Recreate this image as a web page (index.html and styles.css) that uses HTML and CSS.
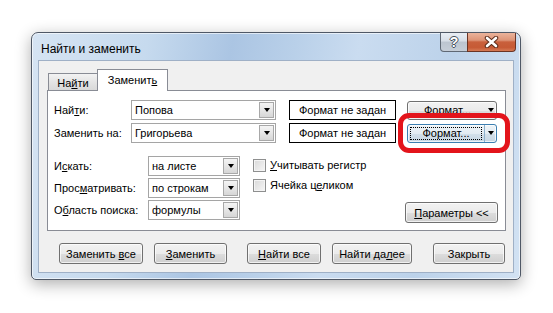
FILE: index.html
```html
<!DOCTYPE html>
<html>
<head>
  <title>Найти и заменить</title>
  <link rel="stylesheet" href="styles.css">
</head>
<body>
  <div class="page">
    <div class="window">
      <div class="titlebar">
        <span class="title">Найти и заменить</span>
        <div class="caption-buttons">
          <div class="cap help">?</div>
          <div class="cap close">
            <svg width="15" height="12" viewBox="0 0 15 12">
              <path d="M3 2 L12 10 M12 2 L3 10" stroke="#5a2a18" stroke-width="4.5" stroke-linecap="round"/>
              <path d="M3 2 L12 10 M12 2 L3 10" stroke="#fff" stroke-width="2.6" stroke-linecap="round"/>
            </svg>
          </div>
        </div>
      </div>

      <div class="client">
        <div class="tabs">
          <div class="tab">На<u>й</u>ти</div>
          <div class="tab active">Заменит<u>ь</u></div>
        </div>

        <div class="tab-panel">
          <div class="find-row">
            <span class="label">Най<u>т</u>и:</span>
            <div class="combo find-combo"><span class="value">Попова</span><span class="drop"></span></div>
            <div class="format-box">Формат не задан</div>
            <div class="btn split-btn"><span class="split-label">Формат...</span><span class="split-arrow"><span class="tri"></span></span></div>
          </div>
          <div class="find-row">
            <span class="label">Заменить на:</span>
            <div class="combo find-combo"><span class="value">Григорьева</span><span class="drop"></span></div>
            <div class="format-box">Формат не задан</div>
            <div class="btn split-btn focused"><span class="split-label"><span class="focus-rect">Формат...</span></span><span class="split-arrow"><span class="tri"></span></span></div>
          </div>

          <div class="options">
            <div class="selects">
              <span class="label">И<u>с</u>кать:</span>
              <div class="combo opt-combo"><span class="value">на листе</span><span class="drop"></span></div>
              <span class="label">Прос<u>м</u>атривать:</span>
              <div class="combo opt-combo"><span class="value">по строкам</span><span class="drop"></span></div>
              <span class="label">О<u>б</u>ласть поиска:</span>
              <div class="combo opt-combo"><span class="value">формулы</span><span class="drop"></span></div>
            </div>
            <div class="checks">
              <div class="check"><span class="box"></span><span><u>У</u>читывать регистр</span></div>
              <div class="check"><span class="box"></span><span>Ячейка ц<u>е</u>ликом</span></div>
            </div>
            <div class="btn params-btn"><span><u>П</u>араметры &lt;&lt;</span></div>
          </div>
        </div>

        <div class="actions">
          <div class="btn-group">
            <div class="btn w84"><span>Заменить <u>в</u>се</span></div>
            <div class="btn w73"><span><u>З</u>аменить</span></div>
          </div>
          <div class="btn-group">
            <div class="btn w74"><span><u>Н</u>айти все</span></div>
            <div class="btn w80"><span>Найти да<u>л</u>ее</span></div>
          </div>
          <div class="btn w72"><span>Закрыть</span></div>
        </div>
      </div>
    </div>
    <div class="highlight"></div>
  </div>
</body>
</html>
```

FILE: styles.css
```css
body {
  margin: 0;
  background: #fff;
  font-family: "Liberation Sans", Arial, sans-serif;
  font-size: 11px;
  color: #000;
}
u {
  text-underline-offset: 1px;
}
.page {
  position: relative;
  width: 553px;
  height: 313px;
  padding: 32px 0 0 31px;
  box-sizing: border-box;
}
.window {
  width: 490px;
  box-sizing: border-box;
  border: 1px solid #4f5866;
  border-radius: 7px 7px 5px 5px;
  padding: 0 6px 6px 6px;
  background: linear-gradient(100deg, #d6e4f3 0%, #c6daee 22%, #abc5e3 38%, #b9d0e9 50%, #cadcf0 62%, #bcd2ea 80%, #d2e2f3 100%);
  box-shadow: 0 4px 16px rgba(0, 0, 0, 0.32), inset 0 0 0 1px rgba(255, 255, 255, 0.6);
}

/* title bar */
.titlebar {
  display: flex;
  height: 27px;
}
.title {
  font-size: 12px;
  padding: 9px 0 0 3px;
}
.caption-buttons {
  display: flex;
  margin-left: auto;
  margin-right: -2px;
}
.cap {
  height: 19px;
  box-sizing: border-box;
  border: 1px solid #5f6874;
  border-top: none;
  display: flex;
  align-items: center;
  justify-content: center;
}
.help {
  width: 28px;
  border-radius: 0 0 0 4px;
  background: linear-gradient(#e9eef4 0%, #d7dee7 45%, #bcc5d0 50%, #c6ced8 100%);
  color: #fff;
  font-weight: bold;
  font-size: 14px;
  text-shadow: 1px 0 #45505c, -1px 0 #45505c, 0 1px #45505c, 0 -1px #45505c;
}
.close {
  width: 49px;
  margin-left: -1px;
  border-color: #6b3424;
  border-radius: 0 0 4px 0;
  background: linear-gradient(#eab39b 0%, #dd9477 40%, #c9603c 50%, #c65a35 80%, #d57a55 100%);
}

/* client area */
.client {
  background: #f0f0f0;
  border: 1px solid #9fb0c6;
  padding: 8px 7px 8px 8px;
}
.tabs {
  display: flex;
  align-items: flex-end;
  height: 21px;
  padding-left: 1px;
}
.tab {
  width: 50px;
  height: 17px;
  box-sizing: border-box;
  border: 1px solid #898c95;
  border-bottom: none;
  background: linear-gradient(#f3f3f3, #e4e4e4 50%, #d9d9d9);
  text-align: center;
  line-height: 18px;
}
.tab.active {
  width: 71px;
  height: 22px;
  margin-left: -1px;
  margin-bottom: -1px;
  position: relative;
  z-index: 1;
  background: #fff;
  line-height: 21px;
}
.tab-panel {
  background: #fff;
  border: 1px solid #898c95;
  padding: 9px 7px 10px 6px;
}

/* find / replace rows */
.find-row {
  display: flex;
  align-items: center;
  height: 20px;
}
.find-row + .find-row {
  margin-top: 3px;
}
.find-row .label {
  width: 77px;
}
.combo {
  display: flex;
  height: 20px;
  box-sizing: border-box;
  border: 1px solid #a5a5a5;
  background: #fff;
  padding: 1px;
}
.combo .value {
  flex: 1;
  padding-left: 2px;
  line-height: 16px;
}
.combo .drop {
  width: 15px;
  box-sizing: border-box;
  border: 1px solid #a8a8a8;
  background: linear-gradient(#f4f4f4, #e6e6e6 50%, #d6d6d6);
  display: flex;
  align-items: center;
  justify-content: center;
}
.combo .drop::after,
.tri {
  content: "";
  display: block;
  width: 0;
  height: 0;
  border-left: 3.5px solid transparent;
  border-right: 3.5px solid transparent;
  border-top: 4px solid #000;
}
.find-combo {
  width: 145px;
}
.format-box {
  width: 107px;
  height: 20px;
  margin-left: 13px;
  box-sizing: border-box;
  border: 1px solid #000;
  background: #fff;
  text-align: center;
  line-height: 18px;
}

/* buttons */
.btn {
  height: 21px;
  box-sizing: border-box;
  border: 1px solid #707070;
  border-radius: 3px;
  background: linear-gradient(#f2f2f2 0%, #ebebeb 50%, #dddddd 51%, #cfcfcf 100%);
  box-shadow: inset 0 0 0 1px rgba(255, 255, 255, 0.7);
  display: flex;
  align-items: center;
  justify-content: center;
}
.split-btn {
  width: 90px;
  height: 19px;
  margin-left: 11px;
  justify-content: flex-start;
}
.split-label {
  flex: 1;
  height: 100%;
  display: flex;
  align-items: center;
  justify-content: center;
  padding-left: 2px;
}
.split-arrow {
  width: 11px;
  height: 100%;
  display: flex;
  align-items: center;
  justify-content: center;
}
.split-btn.focused {
  border-color: #3c7fb1;
  background: linear-gradient(#eef4f8 0%, #e2ebf2 50%, #d3e0ea 51%, #c6d6e3 100%);
}
.split-btn.focused .split-label {
  padding: 2px 2px 2px 2px;
  box-sizing: border-box;
}
.split-btn.focused .split-arrow {
  border-left: 1px solid #8fb2cd;
}
.focus-rect {
  flex: 1;
  height: 100%;
  box-sizing: border-box;
  border: 1px dotted #000;
  display: flex;
  align-items: center;
  justify-content: center;
}

/* search options */
.options {
  display: flex;
  align-items: flex-start;
  margin-top: 13px;
}
.selects {
  display: grid;
  grid-template-columns: 94px 92px;
  grid-auto-rows: 20px;
  row-gap: 2px;
  align-items: center;
}
.checks {
  margin-left: 13px;
  margin-top: -1px;
}
.check {
  display: flex;
  align-items: center;
  height: 20px;
}
.check .box {
  width: 13px;
  height: 13px;
  box-sizing: border-box;
  border: 1px solid #8e8f8f;
  background: linear-gradient(135deg, #d9d9d9, #f6f6f6);
  box-shadow: inset 0 0 0 1px #f4f4f4;
  margin-right: 4px;
}
.params-btn {
  width: 93px;
  margin-left: auto;
  align-self: flex-end;
  margin-bottom: -3px;
}

/* bottom buttons */
.actions {
  display: flex;
  margin-top: 12px;
  padding-left: 12px;
}
.btn-group {
  display: flex;
  gap: 11px;
  margin-right: 20px;
}
.btn-group + .btn-group {
  margin-right: 21px;
}
.w84 { width: 84px; }
.w73 { width: 73px; }
.w74 { width: 74px; }
.w80 { width: 80px; }
.w72 { width: 72px; }

/* red annotation frame */
.highlight {
  position: absolute;
  left: 398px;
  top: 113px;
  width: 112px;
  height: 40px;
  box-sizing: border-box;
  border: 5px solid #e3141b;
  border-radius: 11px;
}
```
